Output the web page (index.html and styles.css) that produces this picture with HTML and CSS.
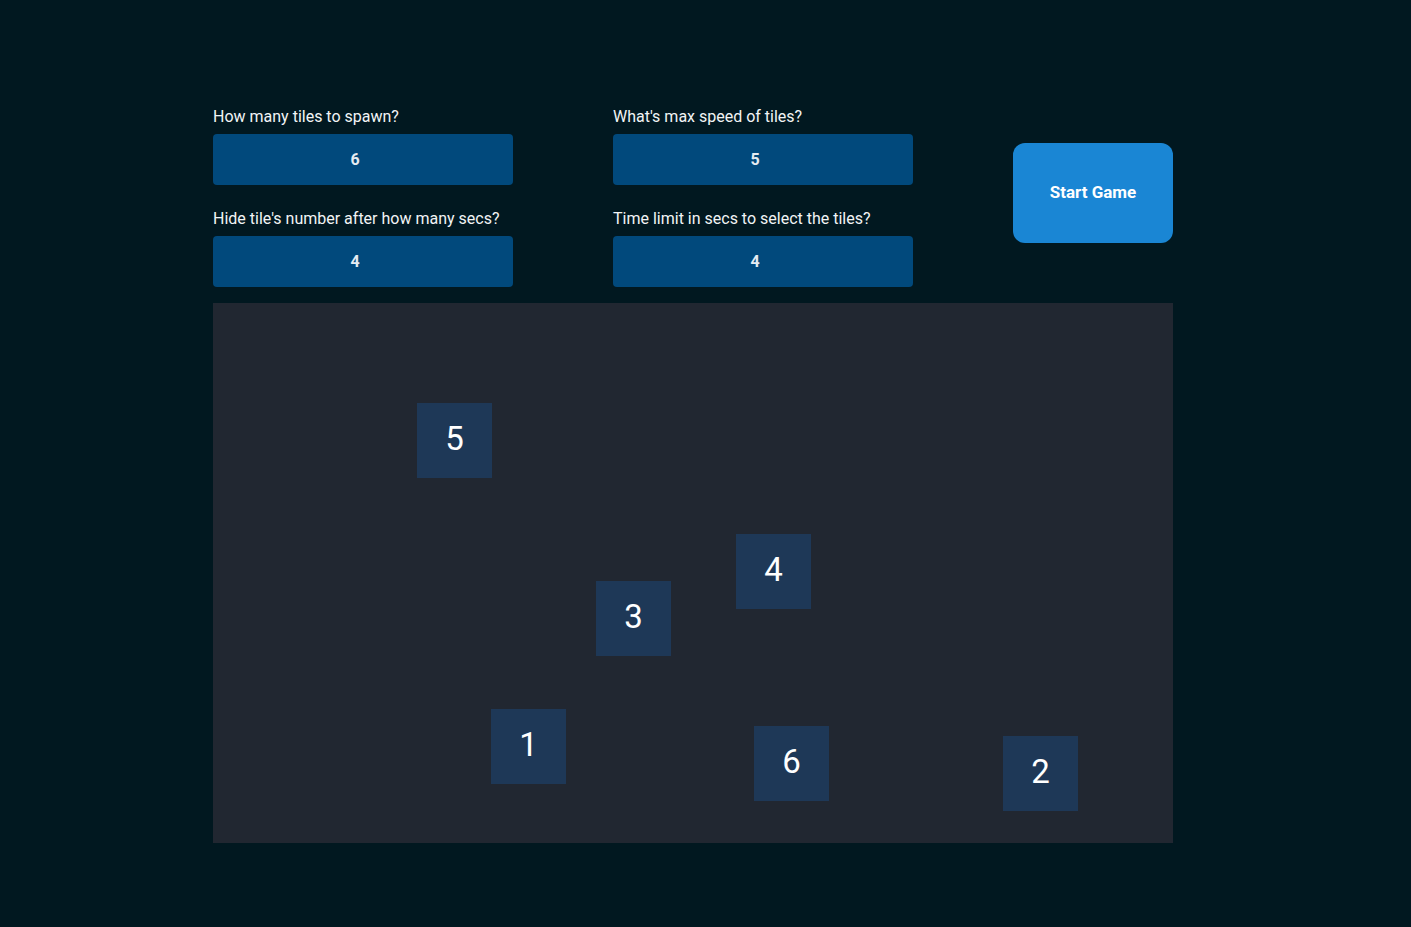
FILE: index.html
```html
<!DOCTYPE html>
<html lang="en">
<head>
<meta charset="utf-8">
<title>Tiles Game</title>
<link rel="stylesheet" href="styles.css">
</head>
<body>
<main class="app">
  <section class="controls">
    <div class="fields">
      <label class="field">
        <span class="field-label">How many tiles to spawn?</span>
        <input class="field-input" type="text" value="6">
      </label>
      <label class="field">
        <span class="field-label">What's max speed of tiles?</span>
        <input class="field-input" type="text" value="5">
      </label>
      <label class="field">
        <span class="field-label">Hide tile's number after how many secs?</span>
        <input class="field-input" type="text" value="4">
      </label>
      <label class="field">
        <span class="field-label">Time limit in secs to select the tiles?</span>
        <input class="field-input" type="text" value="4">
      </label>
    </div>
    <button class="start-btn" type="button">Start Game</button>
  </section>
  <section class="board">
    <div class="tile" style="left:204px;top:100px">5</div>
    <div class="tile" style="left:523px;top:231px">4</div>
    <div class="tile" style="left:383px;top:278px">3</div>
    <div class="tile" style="left:278px;top:406px">1</div>
    <div class="tile" style="left:541px;top:423px">6</div>
    <div class="tile" style="left:790px;top:433px">2</div>
  </section>
</main>
</body>
</html>
```

FILE: styles.css
```css
* { box-sizing: border-box; }

html, body {
  margin: 0;
  padding: 0;
  background: #011820;
  font-family: Roboto, "Liberation Sans", sans-serif;
  color: #ffffff;
}

.app {
  width: 960px;
  margin-left: 213px;
  padding-top: 106px;
}

.controls {
  display: flex;
  align-items: flex-start;
}

.fields {
  display: grid;
  grid-template-columns: 300px 300px;
  column-gap: 100px;
  row-gap: 0;
}

.field {
  display: flex;
  flex-direction: column;
  height: 102px;
}

.field-label {
  font-size: 16px;
  line-height: 22px;
  height: 28px;
  color: #f2f4f5;
}

.field-input {
  width: 300px;
  height: 51px;
  border: none;
  border-radius: 4px;
  background: #01497c;
  color: #e6ecf2;
  font-family: Roboto, "Liberation Sans", sans-serif;
  font-weight: 700;
  font-size: 16px;
  text-align: center;
  outline: none;
  padding: 0 16px 0 0;
}

.start-btn {
  margin-left: 100px;
  margin-top: 37px;
  width: 160px;
  height: 100px;
  border: none;
  border-radius: 12px;
  background: #1a86d4;
  color: #ffffff;
  font-family: Roboto, "Liberation Sans", sans-serif;
  font-weight: 700;
  font-size: 17px;
  padding: 0 0 2px 0;
  cursor: pointer;
}

.board {
  position: relative;
  width: 960px;
  height: 540px;
  margin-top: -7px;
  background: #212731;
}

.tile {
  position: absolute;
  width: 75px;
  height: 75px;
  padding-bottom: 5px;
  background: #1e3857;
  color: #ffffff;
  font-size: 33px;
  display: flex;
  align-items: center;
  justify-content: center;
}
```
